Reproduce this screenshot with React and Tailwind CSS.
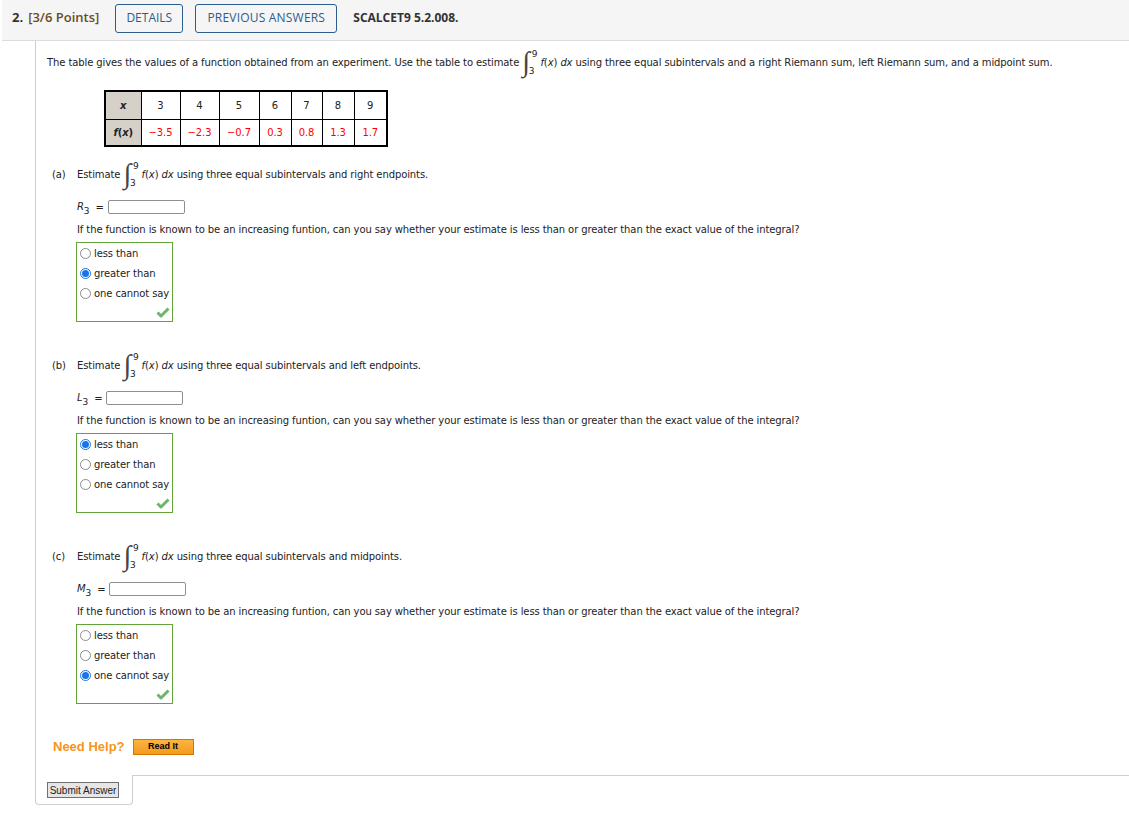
import React from 'react'

const q = "font-['DejaVu_Sans',sans-serif] text-[10px] tracking-[-0.1px]"

const Integral = () => (
	<span className="inline-flex items-stretch mx-[3px] h-[30px]">
		<span className="font-['Liberation_Serif',serif] italic text-[28px] leading-[30px] text-[#444]">∫</span>
		<span className="flex flex-col justify-between text-[9px] leading-[10px] pt-[2px] pb-[1px]">
			<span className="ml-[2px]">9</span>
			<span className="-ml-[1px]">3</span>
		</span>
	</span>
)

const Fx = () => (
	<span className="whitespace-nowrap">
		<i>f</i>(<i>x</i>) <i>dx</i>
	</span>
)

const Radio = ({ checked }) =>
	checked ? (
		<span className="w-[11px] h-[11px] shrink-0 rounded-full border border-[#1a73e8] bg-white flex items-center justify-center">
			<span className="w-[7px] h-[7px] rounded-full bg-[#1a73e8]" />
		</span>
	) : (
		<span className="w-[11px] h-[11px] shrink-0 rounded-full border border-[#8a8a8a] bg-white" />
	)

const Check = () => (
	<svg width="14" height="11" viewBox="0 0 14 11">
		<path d="M1.5 5.5 L5 9 L12.5 1.5" fill="none" stroke="#6cb56c" strokeWidth="3" strokeLinejoin="round" />
	</svg>
)

const options = ['less than', 'greater than', 'one cannot say']

const Part = ({ label, text, sym, picked, first }) => (
	<div className={first ? 'mt-[12px]' : 'mt-[28px]'}>
		<div className="flex items-center h-[30px] pl-[5px]">
			<span className="w-[25px]">({label})</span>
			<span>Estimate</span>
			<Integral />
			<Fx />
			<span className="ml-[3px]">using three equal subintervals and {text}.</span>
		</div>
		<div className="flex items-center h-[16px] mt-[10px] pl-[30px]">
			<span className="italic">
				{sym}
				<span className="relative top-[4px] text-[9px] not-italic">3</span>
			</span>
			<span className="ml-[6px]">=</span>
			<span className="ml-[4px] w-[77px] h-[14px] border border-[#8f8f8f] rounded-[2px] bg-white" />
		</div>
		<div className="mt-[8px] pl-[30px] leading-[14px]">
			If the function is known to be an increasing funtion, can you say whether your estimate is less than or greater than the exact value of the integral?
		</div>
		<div className="mt-[5px] ml-[29px] w-[97px] h-[80px] border border-[#62a43a] flex flex-col">
			{options.map((o, i) => (
				<div key={o} className="flex items-center h-[20px] pl-[3px] gap-[3px] whitespace-nowrap">
					<Radio checked={i === picked} />
					<span>{o}</span>
				</div>
			))}
			<div className="flex-1 flex items-center justify-end pr-[2px]">
				<Check />
			</div>
		</div>
	</div>
)

const xs = [3, 4, 5, 6, 7, 8, 9]
const fs = ['−3.5', '−2.3', '−0.7', '0.3', '0.8', '1.3', '1.7']
const widths = ['w-[39px]', 'w-[39px]', 'w-[40px]', 'w-[32px]', 'w-[31px]', 'w-[32px]', 'w-[33px]']

export default function App() {
	return (
		<div className="min-h-[815px] bg-white text-[#222]">
			{/* header bar */}
			<div className="ml-[2px] h-[41px] bg-[#f5f5f5] border-b border-[#dcdcdc] flex items-center pl-[10px] pb-[4px] font-['Open_Sans',sans-serif] text-[12px]">
				<span className="font-bold text-[13px] text-[#333]">2.</span>
				<span className="ml-[5px] font-semibold text-[13px] text-[#6b4c1c]">[3/6 Points]</span>
				<span className="ml-[16px] w-[68px] h-[29px] border border-[#2b5e8c] rounded-[3px] text-[#2b5e8c] flex items-center justify-center">DETAILS</span>
				<span className="ml-[12px] w-[142px] h-[29px] border border-[#2b5e8c] rounded-[3px] text-[#2b5e8c] tracking-[0.2px] flex items-center justify-center">PREVIOUS ANSWERS</span>
				<span className="ml-[16px] font-bold text-[#333]">SCALCET9 5.2.008.</span>
			</div>

			<div className={`ml-[35px] border-l border-[#cfcfcf] pl-[11px] pt-[6px] pb-[19px] ${q}`}>
				<div className="flex items-center h-[30px]">
					<span>The table gives the values of a function obtained from an experiment. Use the table to estimate</span>
					<Integral />
					<Fx />
					<span className="ml-[3px]">using three equal subintervals and a right Riemann sum, left Riemann sum, and a midpoint sum.</span>
				</div>

				<table className="mt-[13px] ml-[57px] border-collapse border-2 border-black text-center">
					<tbody>
						<tr className="h-[28px]">
							<td className="w-[36px] border border-black bg-[#d5d1c8] font-bold italic">x</td>
							{xs.map((x, i) => (
								<td key={x} className={`${widths[i]} border border-black`}>{x}</td>
							))}
						</tr>
						<tr className="h-[27px]">
							<td className="border border-black bg-[#d5d1c8] font-bold">
								<i>f</i>(<i>x</i>)
							</td>
							{fs.map((v) => (
								<td key={v} className="border border-black text-[#f00]">{v}</td>
							))}
						</tr>
					</tbody>
				</table>

				<Part first label="a" text="right endpoints" sym="R" picked={1} />
				<Part label="b" text="left endpoints" sym="L" picked={0} />
				<Part label="c" text="midpoints" sym="M" picked={2} />

				<div className="mt-[34px] pl-[6px] flex items-center h-[18px] font-['Liberation_Sans',sans-serif] tracking-normal">
					<span className="text-[13px] font-bold text-[#f7941d]">Need Help?</span>
					<span className="ml-[8px] w-[61px] h-[16px] border border-[#d27800] bg-gradient-to-b from-[#fbb540] to-[#f39a1c] flex items-center justify-center text-[9px] font-bold text-black">
						Read It
					</span>
				</div>
			</div>

			{/* bottom tab */}
			<div className="flex ml-[35px]">
				<div className="w-[98px] h-[30px] shrink-0 flex items-start border-l border-b border-r border-[#cfcfcf] rounded-b-[4px] pl-[11px] pt-[7px]">
					<span className="flex items-center justify-center w-[72px] h-[16px] bg-[#e6e6e6] border border-[#6f6f6f] font-['Liberation_Sans',sans-serif] text-[10px] text-[#222] whitespace-nowrap">
						Submit Answer
					</span>
				</div>
				<div className="flex-1 border-t border-[#cfcfcf]" />
			</div>
		</div>
	)
}
